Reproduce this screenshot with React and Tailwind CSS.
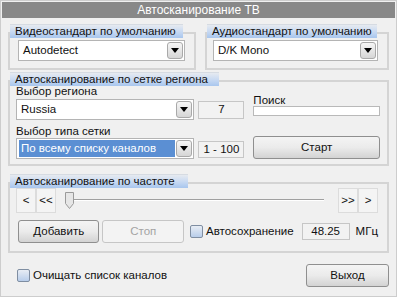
import clsx from "clsx";

const font = { fontFamily: '"Liberation Sans", Arial, sans-serif' };

const Group = ({ title, labelW, className, boxClass, children }) => (
  <div className={clsx("flex flex-col", className)}>
    <div
      className={clsx(
        "relative z-10 ml-[2px] h-[14px] whitespace-nowrap border-t border-[#d6dbe2] bg-linear-to-b from-[#e6eaf0] via-[#c9daf2] to-[#a8c6ee] pl-[5px] text-[11.5px] leading-[13px] text-[#111]",
        labelW
      )}
    >
      {title}
    </div>
    <div className={clsx("-mt-[6px] border-2 border-[#d4d4d4]", boxClass)}>{children}</div>
  </div>
);

const Arrow = () => (
  <div className="flex h-full w-[16px] items-center justify-center rounded-[3px] border border-[#a9a9a9] bg-linear-to-b from-[#f6f6f6] to-[#d6d6d6]">
    <svg width="8" height="5" viewBox="0 0 8 5">
      <path d="M0 0h8L4 5z" fill="#000" />
    </svg>
  </div>
);

const Select = ({ value, selected, className }) => (
  <div className={clsx("flex h-[21px] items-stretch border border-[#b4b4b4] bg-white p-[1px]", className)}>
    <div className="flex flex-1 items-center pl-[1px]">
      <span
        className={clsx(
          "flex h-full flex-1 items-center whitespace-nowrap px-[2px] text-[11.5px]",
          selected ? "bg-[#5b8fd3] text-white" : "text-[#111]"
        )}
      >
        {value}
      </span>
    </div>
    <div className="ml-[1px]">
      <Arrow />
    </div>
  </div>
);

const Btn = ({ children, disabled, className }) => (
  <div
    className={clsx(
      "flex items-center justify-center whitespace-nowrap rounded-[3px] border text-[11.5px]",
      disabled
        ? "border-[#c6c6c6] bg-[#f3f3f3] text-[#a3a3a3]"
        : "border-[#8f8f8f] bg-linear-to-b from-[#f4f4f4] via-[#ebebeb] to-[#d3d3d3] text-[#111]",
      className
    )}
  >
    {children}
  </div>
);

const Check = () => (
  <div className="h-[13px] w-[13px] rounded-[2px] border border-[#7f8ea2] bg-linear-to-b from-[#e8edf4] to-[#b8cdea]" />
);

const Value = ({ children, className }) => (
  <div className={clsx("flex items-center justify-center whitespace-nowrap border border-[#c6c6c6] bg-[#f2f2f2] text-[11.5px] text-[#111]", className)}>
    {children}
  </div>
);

const NavBtn = ({ children }) => (
  <div className="flex h-[25px] w-[20px] items-center justify-center border border-[#dcdcdc] bg-[#f4f4f4] text-[11.5px] text-[#111]">
    {children}
  </div>
);

export default function App() {
  return (
    <div style={font} className="flex h-[297px] w-[397px] flex-col border border-[#cdcdcd] bg-[#f0f0f0] text-[#111]">
      <div className="mx-[1px] mt-[1px] h-[16px] bg-[#888888] text-center text-[12px] leading-[16px] text-white">
        Автосканирование ТВ
      </div>

      <div className="flex flex-col px-[7px] pt-[6px]">
        <div className="flex gap-[9px]">
          <Group title="Видеостандарт по умолчанию" labelW="w-[173px]" className="w-[189px]" boxClass="pl-[8px] pr-[9px] pt-[6px] pb-[7px]">
            <Select value="Autodetect" />
          </Group>
          <Group title="Аудиостандарт по умолчанию" labelW="w-[170px]" className="w-[185px]" boxClass="pl-[6px] pr-[9px] pt-[6px] pb-[7px]">
            <Select value="D/K Mono" />
          </Group>
        </div>

        <Group title="Автосканирование по сетке региона" labelW="w-[209px]" className="mt-[2px]" boxClass="pl-[6px] pr-[7px] pt-[3px] pb-[5px]">
          <div className="flex items-end">
            <div className="flex w-[179px] flex-col">
              <span className="h-[14px] whitespace-nowrap text-[11.5px] leading-[13px]">Выбор региона</span>
              <Select value="Russia" />
            </div>
            <Value className="mb-[1px] ml-[4px] h-[18px] w-[46px]">7</Value>
            <div className="mb-[4px] ml-[9px] flex w-[127px] flex-col">
              <span className="h-[11px] text-[11.5px] leading-[10px]">Поиск</span>
              <div className="h-[10px] border border-[#b9b9b9] bg-white" />
            </div>
          </div>
          <div className="mt-[5px] flex items-end">
            <div className="flex w-[179px] flex-col">
              <span className="h-[13px] whitespace-nowrap text-[11.5px] leading-[12px]">Выбор типа сетки</span>
              <Select value="По всему списку каналов" selected />
            </div>
            <Value className="mb-[1px] ml-[4px] h-[17px] w-[46px]">1 - 100</Value>
            <Btn className="ml-[9px] h-[23px] w-[127px]">Старт</Btn>
          </div>
        </Group>

        <Group title="Автосканирование по частоте" labelW="w-[178px]" className="mt-[8px]" boxClass="pl-[6px] pr-[9px] pt-[4px] pb-[8px]">
          <div className="flex items-center">
            <NavBtn>&lt;</NavBtn>
            <NavBtn>&lt;&lt;</NavBtn>
            <div className="relative ml-[3px] h-[25px] flex-1">
              <div className="absolute left-[10px] right-[8px] top-[11px] h-[2px] border-t border-b border-t-[#a0a0a0] border-b-white bg-[#d6d6d6]" />
              <svg className="absolute left-[6px] top-[4px]" width="9" height="17" viewBox="0 0 9 17">
                <path d="M0.5 0.5h8v11l-4 5l-4-5z" fill="#e6e6e6" stroke="#9a9a9a" />
              </svg>
            </div>
            <div className="ml-[6px] flex">
              <NavBtn>&gt;&gt;</NavBtn>
              <NavBtn>&gt;</NavBtn>
            </div>
          </div>
          <div className="mt-[7px] flex items-center">
            <Btn className="ml-[2px] h-[23px] w-[85px]">Добавить</Btn>
            <Btn disabled className="ml-[3px] h-[23px] w-[85px]">Стоп</Btn>
            <div className="ml-[6px]">
              <Check />
            </div>
            <span className="ml-[3px] whitespace-nowrap text-[11.5px]">Автосохранение</span>
            <Value className="ml-[8px] h-[17px] w-[50px]">48.25</Value>
            <span className="ml-[6px] text-[11.5px]">МГц</span>
          </div>
        </Group>

        <div className="mt-[11px] flex items-center">
          <div className="ml-[9px]">
            <Check />
          </div>
          <span className="ml-[3px] whitespace-nowrap text-[11.5px]">Очищать список каналов</span>
          <Btn className="ml-auto h-[23px] w-[83px]">Выход</Btn>
        </div>
      </div>
    </div>
  );
}
